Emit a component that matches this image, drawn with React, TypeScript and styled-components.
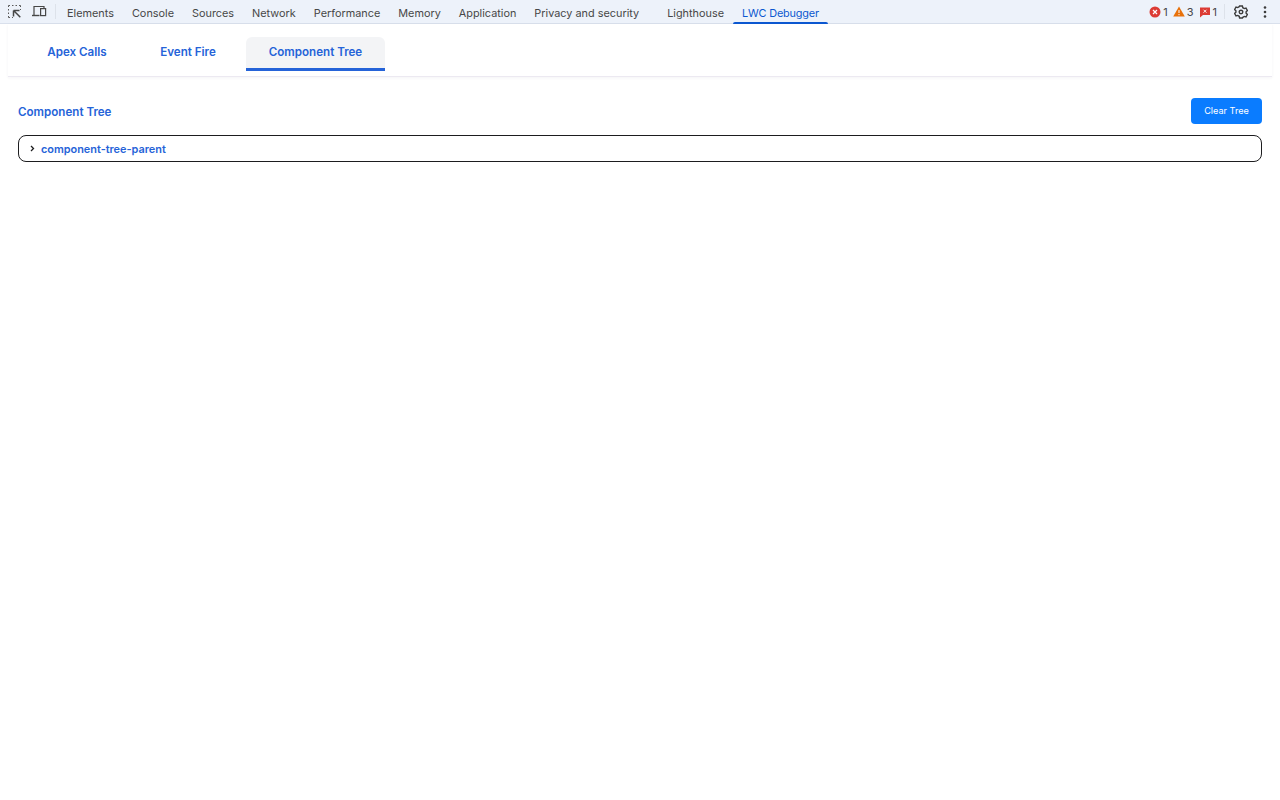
import React from "react";
import styled, { createGlobalStyle } from "styled-components";

const Global = createGlobalStyle`
  html, body { margin: 0; padding: 0; background: #fff; height: 100%; }
  body { font-family: Inter, "Liberation Sans", sans-serif; overflow: hidden; }
`;

const Page = styled.div`
  width: 1280px;
  height: 800px;
  display: flex;
  flex-direction: column;
  background: #fff;
`;

const DevBar = styled.header`
  height: 23px;
  flex: none;
  display: flex;
  align-items: center;
  background: #edf2fa;
  border-bottom: 1px solid #d9e0ec;
  padding: 0 5px 0 7px;
`;

const IconSlot = styled.span<{ $w: number }>`
  width: ${(p) => p.$w}px;
  height: 23px;
  display: flex;
  align-items: center;
  flex: none;
  color: #474747;
`;

const BarDivider = styled.span<{ $m: string }>`
  width: 1px;
  height: 15px;
  background: #dde2ea;
  margin: ${(p) => p.$m};
  flex: none;
`;

const DevTab = styled.div<{ $active?: boolean; $gap?: number }>`
  position: relative;
  height: 23px;
  line-height: 27px;
  flex: none;
  font-size: 10.87px;
  letter-spacing: ${(p) => (p.$active ? "-0.15px" : "0")};
  padding: 0 9px;
  margin-left: ${(p) => p.$gap ?? 0}px;
  white-space: nowrap;
  color: ${(p) => (p.$active ? "#0b57d0" : "#474747")};
  ${(p) =>
    p.$active &&
    `&::after { content: ""; position: absolute; left: 0; right: 0; bottom: -1px; height: 2px; background: #0b57d0; border-radius: 2px 2px 0 0; }`}
`;

const StatusGroup = styled.div`
  margin-left: auto;
  display: flex;
  align-items: center;
  height: 23px;
`;

const Count = styled.span<{ $mr: number }>`
  display: flex;
  align-items: center;
  gap: 2px;
  font-size: 11px;
  line-height: 24px;
  color: #474747;
  margin-right: ${(p) => p.$mr}px;
`;

const TabCard = styled.nav`
  flex: none;
  height: 53px;
  margin: 0 8px;
  box-sizing: border-box;
  padding: 13px 0 0 16px;
  display: flex;
  align-items: flex-start;
  background: #fff;
  border-bottom: 1px solid #ece9f1;
  box-shadow: 0 1px 3px rgba(40, 40, 70, 0.05);
`;

const PanelTab = styled.button<{ $active?: boolean; $w: number }>`
  width: ${(p) => p.$w}px;
  height: 34px;
  box-sizing: border-box;
  flex: none;
  margin-right: ${(p) => (p.$active ? 0 : 5)}px;
  border: 0;
  border-bottom: 3px solid ${(p) => (p.$active ? "#2563d8" : "transparent")};
  border-radius: 6px 6px 0 0;
  background: ${(p) => (p.$active ? "#f3f4f6" : "transparent")};
  color: #2563d8;
  font: 600 11.6px Inter, "Liberation Sans", sans-serif;
  padding: 0 0 2px;
`;

const Content = styled.main`
  padding: 21px 18px 0;
`;

const TitleRow = styled.div`
  display: flex;
  justify-content: space-between;
  align-items: center;
  height: 26px;
`;

const Title = styled.h2`
  margin: 1px 0 0;
  font-size: 11.6px;
  font-weight: 600;
  color: #2563d8;
`;

const ClearButton = styled.button`
  width: 71px;
  height: 26px;
  border: 0;
  border-radius: 4px;
  background: #0a7cff;
  color: #fff;
  font: 400 9.1px Inter, "Liberation Sans", sans-serif;
  padding: 0 0 1px;
`;

const TreeRow = styled.div`
  margin-top: 11px;
  height: 27px;
  box-sizing: border-box;
  border: 1px solid #1d1d1f;
  border-radius: 8px;
  display: flex;
  align-items: center;
  padding-left: 11px;
  gap: 6px;
`;

const NodeName = styled.span`
  font-size: 10.9px;
  font-weight: 600;
  color: #2563d8;
`;

const tabs = ["Elements", "Console", "Sources", "Network", "Performance", "Memory", "Application", "Privacy and security"];

export default function App() {
  return (
    <Page>
      <Global />
      <DevBar>
        <IconSlot $w={24}>
          <svg width="15" height="15" viewBox="0 0 15 15" fill="none">
            <path d="M1.5 3V1.5H3M5 1.5h1.5M8.5 1.5H10M12 1.5h1.5V3M13.5 5v1M1.5 5v1.5M1.5 8.5V10M1.5 12v1.5H3M5 13.5h1" stroke="#5a5a5a" strokeWidth="1" />
            <path d="M6.5 6.5h6M6.5 6.5v6M6.8 6.8l6.5 6.5" stroke="#474747" strokeWidth="1.5" />
          </svg>
        </IconSlot>
        <IconSlot $w={22}>
          <svg width="16" height="15" viewBox="0 0 16 15" fill="none">
            <path d="M3 11V2.5h10V4" stroke="#474747" strokeWidth="1.2" />
            <path d="M1 11.5h7.5" stroke="#474747" strokeWidth="1.4" />
            <rect x="9.6" y="4.6" width="5" height="7" stroke="#474747" strokeWidth="1.2" />
          </svg>
        </IconSlot>
        <BarDivider $m="0 2px 0 2px" />
        {tabs.map((t) => (
          <DevTab key={t}>{t}</DevTab>
        ))}
        <DevTab $gap={10}>Lighthouse</DevTab>
        <DevTab $active>LWC Debugger</DevTab>
        <StatusGroup>
          <Count $mr={5}>
            <svg width="12" height="12" viewBox="0 0 12 12">
              <circle cx="6" cy="6" r="5.5" fill="#dc3b34" />
              <path d="M4 4l4 4M8 4l-4 4" stroke="#fff" strokeWidth="1.2" />
            </svg>
            1
          </Count>
          <Count $mr={5}>
            <svg width="12" height="11" viewBox="0 0 12 11">
              <path d="M6 .5L11.8 10.5H.2z" fill="#e8710a" />
              <path d="M6 4v3M6 8v1.2" stroke="#fff" strokeWidth="1" />
            </svg>
            3
          </Count>
          <Count $mr={7}>
            <svg width="12" height="12" viewBox="0 0 12 12">
              <path d="M1 1.5h10v7.5H4L1 11.5z" fill="#dc3b34" />
              <path d="M4.5 3.7l3 3M7.5 3.7l-3 3" stroke="#fff" strokeWidth="0.9" />
            </svg>
            1
          </Count>
          <BarDivider $m="0 9px 0 0" />
          <IconSlot $w={24}>
            <svg width="14" height="14" viewBox="0 0 14 14" fill="none">
              <path d="M5.6 1h2.8l.4 1.7 1.5.9 1.7-.5 1.4 2.4-1.3 1.2v1.6l1.3 1.2-1.4 2.4-1.7-.5-1.5.9L8.4 13H5.6l-.4-1.7-1.5-.9-1.7.5L.6 8.5l1.3-1.2V5.7L.6 4.5 2 2.1l1.7.5 1.5-.9z" stroke="#3c3c3c" strokeWidth="1.4" />
              <circle cx="7" cy="7" r="1.8" stroke="#3c3c3c" strokeWidth="1.4" />
            </svg>
          </IconSlot>
          <IconSlot $w={17}>
            <svg width="14" height="14" viewBox="0 0 14 14" fill="#3c3c3c">
              <circle cx="7" cy="2.5" r="1.3" />
              <circle cx="7" cy="7" r="1.3" />
              <circle cx="7" cy="11.5" r="1.3" />
            </svg>
          </IconSlot>
        </StatusGroup>
      </DevBar>
      <TabCard>
        <PanelTab $w={106}>Apex Calls</PanelTab>
        <PanelTab $w={106}>Event Fire</PanelTab>
        <PanelTab $active $w={139}>Component Tree</PanelTab>
      </TabCard>
      <Content>
        <TitleRow>
          <Title>Component Tree</Title>
          <ClearButton>Clear Tree</ClearButton>
        </TitleRow>
        <TreeRow>
          <svg width="5" height="7" viewBox="0 0 5 7" fill="none">
            <path d="M1 1l2.5 2.5L1 6" stroke="#1d1d1f" strokeWidth="1.3" />
          </svg>
          <NodeName>component-tree-parent</NodeName>
        </TreeRow>
      </Content>
    </Page>
  );
}
